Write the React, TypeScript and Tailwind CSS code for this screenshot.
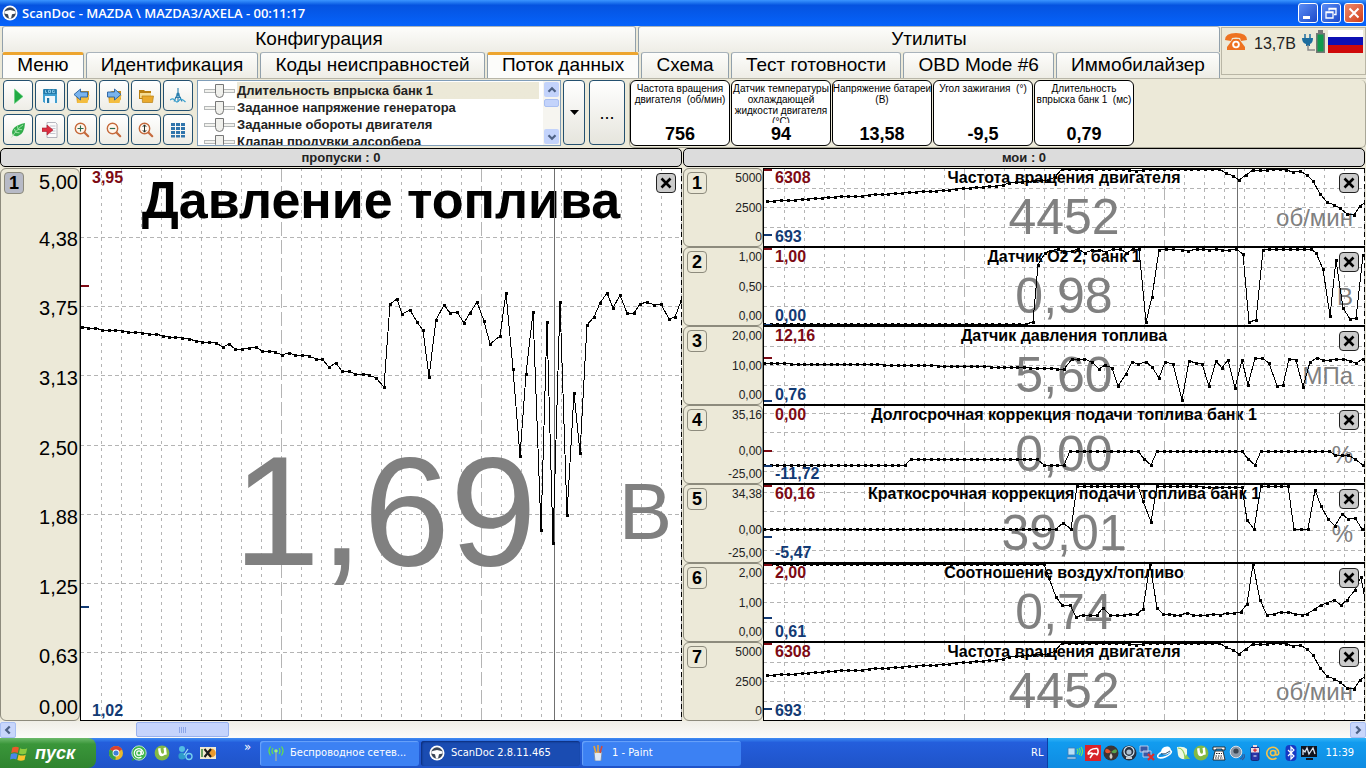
import type { ReactNode } from 'react';

type Point = [number, number];

interface Tick {
  label: string;
  // 0 = top of the chart, 1 = bottom
  at: number;
}

interface ChannelData {
  id: number;
  title: string;
  value: string;
  unit: string;
  max: string;
  min: string;
  maxY: number;
  minY: number;
  ticks: Tick[];
  gridY: number[];
  points: Point[];
}

const W = 602;
const ROW_H = 79;
const MAIN_H = 553;
const STEP = 6.7;

// fills long segments with evenly spaced samples
function resample(keys: Point[]): Point[] {
  const out: Point[] = [keys[0]];
  for (let i = 1; i < keys.length; i++) {
    const [x0, y0] = keys[i - 1];
    const [x1, y1] = keys[i];
    const n = Math.max(1, Math.round((x1 - x0) / STEP));
    for (let k = 1; k <= n; k++) {
      out.push([Math.round(x0 + ((x1 - x0) * k) / n), Math.round(y0 + ((y1 - y0) * k) / n)]);
    }
  }
  return out;
}

const fuelPressure: Point[] = [
  [2, 159], [8, 160], [15, 160], [22, 162], [29, 162], [35, 162], [42, 163], [48, 164], [55, 164], [62, 165],
  [69, 166], [76, 166], [83, 168], [89, 169], [95, 169], [102, 170], [109, 171], [116, 173], [122, 174], [129, 174],
  [136, 175], [143, 179], [149, 176], [155, 181], [162, 181], [169, 180], [176, 179], [182, 183], [189, 183],
  [195, 184], [202, 187], [209, 185], [215, 187], [222, 187], [229, 188], [236, 191], [242, 191], [249, 199],
  [256, 195], [262, 203], [269, 203], [275, 206], [283, 206], [289, 207], [296, 210], [304, 219], [310, 136],
  [317, 131], [322, 146], [330, 142], [337, 154], [343, 162], [349, 209], [356, 152], [364, 137], [370, 145],
  [377, 144], [384, 155], [390, 145], [397, 134], [404, 153], [410, 176], [420, 168], [426, 125], [433, 201],
  [440, 288], [446, 206], [453, 144], [461, 362], [467, 154], [473, 375], [480, 134], [487, 347], [494, 225],
  [500, 285], [507, 157], [514, 149], [520, 135], [527, 125], [533, 140], [540, 127], [547, 145], [554, 145],
  [560, 136], [567, 134], [574, 137], [581, 136], [589, 151], [595, 149], [601, 133],
];

const rpm: Point[] = [
  [4, 33], [25, 32], [52, 30], [78, 28], [99, 28], [112, 26], [125, 26], [160, 23], [186, 22], [200, 20], [233, 18],
  [253, 14], [264, 13], [285, 12], [292, 9], [299, 1], [360, 1], [366, 2], [373, 3], [380, 2], [387, 1], [456, 1],
  [463, 5], [470, 8], [476, 12], [483, 7], [490, 2], [517, 1], [523, 2], [530, 4], [537, 3], [544, 7], [550, 13],
  [557, 26], [564, 34], [571, 37], [577, 40], [584, 46], [591, 47], [597, 38], [603, 34],
];

const oxygen: Point[] = [
  [1, 77], [263, 77], [270, 75], [275, 18], [282, 6], [287, 4], [295, 2], [301, 5], [309, 4], [315, 2], [322, 6],
  [329, 3], [336, 3], [343, 5], [350, 2], [357, 2], [364, 6], [370, 2], [376, 2], [383, 75], [389, 50], [396, 3],
  [403, 2], [410, 2], [419, 3], [425, 4], [434, 2], [440, 2], [446, 3], [453, 2], [459, 3], [466, 3], [473, 2],
  [480, 7], [486, 75], [493, 73], [500, 3], [506, 2], [548, 2], [553, 6], [560, 22], [567, 69], [573, 13],
  [580, 61], [587, 72], [593, 71], [600, 8],
];

const pressure: Point[] = [
  [1, 37], [21, 37], [28, 38], [94, 38], [148, 39], [201, 40], [248, 41], [254, 41], [301, 43], [309, 33],
  [321, 33], [329, 36], [336, 43], [342, 39], [349, 42], [355, 60], [363, 48], [369, 36], [375, 38], [383, 36],
  [389, 41], [396, 52], [402, 36], [410, 38], [419, 74], [426, 35], [433, 37], [439, 38], [446, 60], [453, 35],
  [459, 42], [465, 34], [472, 62], [479, 34], [485, 59], [492, 32], [499, 32], [506, 37], [514, 60], [520, 59],
  [526, 33], [533, 34], [540, 61], [547, 36], [554, 32], [560, 34], [580, 33], [593, 37], [600, 33],
];

const longTrim: Point[] = [
  [1, 60], [142, 60], [148, 54], [274, 54], [281, 60], [301, 60], [307, 46], [375, 46], [381, 54], [388, 60],
  [394, 46], [479, 46], [485, 54], [492, 60], [498, 46], [566, 46], [572, 50], [585, 50], [592, 54], [600, 60],
];

const shortTrim: Point[] = [
  [1, 45], [293, 45], [300, 39], [308, 45], [314, 2], [375, 2], [380, 17], [388, 38], [394, 2], [479, 3], [484, 36],
  [491, 45], [498, 2], [525, 2], [531, 45], [545, 45], [552, 6], [558, 22], [565, 35], [572, 42], [579, 30],
  [585, 35], [592, 34], [599, 45], [602, 45],
];

const airFuel: Point[] = [
  [1, 1], [281, 1], [286, 15], [293, 34], [299, 42], [307, 42], [313, 54], [320, 52], [334, 52], [340, 45],
  [347, 52], [374, 51], [380, 46], [387, 1], [394, 45], [400, 51], [417, 52], [424, 50], [430, 52], [444, 52],
  [450, 51], [457, 52], [464, 50], [478, 49], [484, 41], [490, 1], [497, 37], [504, 52], [518, 49], [525, 49],
  [539, 52], [544, 51], [552, 46], [558, 42], [564, 40], [571, 37], [578, 42], [584, 37], [592, 27], [598, 14],
  [602, 36],
];

const evenGrid = [20, 39, 59];
const trimGrid = [8, 27, 46, 66];

const ticks3 = (a: string, b: string, c: string, mid = 0.5): Tick[] => [
  { label: a, at: 0 },
  { label: b, at: mid },
  { label: c, at: 1 },
];

const channels: ChannelData[] = [
  { id: 1, title: 'Частота вращения двигателя', value: '4452', unit: 'об/мин', max: '6308', min: '693', maxY: 1, minY: 66, ticks: ticks3('5000', '2500', '0'), gridY: evenGrid, points: rpm },
  { id: 2, title: 'Датчик О2 2, банк 1', value: '0,98', unit: 'В', max: '1,00', min: '0,00', maxY: 1, minY: 77, ticks: ticks3('1,00', '0,50', '0,00'), gridY: evenGrid, points: oxygen },
  { id: 3, title: 'Датчик давления топлива', value: '5,60', unit: 'МПа', max: '12,16', min: '0,76', maxY: 31, minY: 74, ticks: ticks3('20,00', '10,00', '0,00'), gridY: evenGrid, points: pressure },
  { id: 4, title: 'Долгосрочная коррекция подачи топлива банк 1', value: '0,00', unit: '%', max: '0,00', min: '-11,72', maxY: 45, minY: 60, ticks: ticks3('35,16', '0,00', '-25,00', 0.58), gridY: trimGrid, points: longTrim },
  { id: 5, title: 'Краткосрочная коррекция подачи топлива банк 1', value: '39,01', unit: '%', max: '60,16', min: '-5,47', maxY: 1, minY: 52, ticks: ticks3('34,38', '0,00', '-25,00', 0.58), gridY: trimGrid, points: shortTrim },
  { id: 6, title: 'Соотношение воздух/топливо', value: '0,74', unit: '', max: '2,00', min: '0,61', maxY: 1, minY: 54, ticks: ticks3('2,00', '1,00', '0,00'), gridY: evenGrid, points: airFuel },
  { id: 7, title: 'Частота вращения двигателя', value: '4452', unit: 'об/мин', max: '6308', min: '693', maxY: 1, minY: 66, ticks: ticks3('5000', '2500', '0'), gridY: evenGrid, points: rpm },
];

const mainTicks = ['5,00', '4,38', '3,75', '3,13', '2,50', '1,88', '1,25', '0,63', '0,00'];

const gauges = [
  { title: 'Частота вращения двигателя  (об/мин)', value: '756' },
  { title: 'Датчик температуры охлаждающей жидкости двигателя (°C)', value: '94' },
  { title: 'Напряжение батареи (В)', value: '13,58' },
  { title: 'Угол зажигания  (°)', value: '-9,5' },
  { title: 'Длительность впрыска банк 1  (мс)', value: '0,79' },
];

const params = [
  'Длительность впрыска банк 1',
  'Заданное напряжение генератора',
  'Заданные обороты двигателя',
  'Клапан продувки адсорбера',
];

const tabs = ['Меню', 'Идентификация', 'Коды неисправностей', 'Поток данных', 'Схема', 'Тест готовности', 'OBD Mode #6', 'Иммобилайзер'];

/* ---------- icons ---------- */

function Svg({ size = 16, children }: { size?: number; children: ReactNode }) {
  return (
    <svg width={size} height={size} viewBox="0 0 16 16" fill="none" aria-hidden="true" className="shrink-0">
      {children}
    </svg>
  );
}

function WheelIcon({ size }: { size?: number }) {
  return (
    <Svg size={size}>
      <circle cx="8" cy="8" r="7.5" fill="#fff" />
      <circle cx="8" cy="8" r="5.8" fill="#3b4656" />
      <path d="M2.5 6.5Q8 3.5 13.5 6.5L13.6 8.5 10 9.2 9 13.4H7L6 9.2 2.4 8.5z" fill="#fff" />
      <path d="M4.2 5.2Q8 3 11.8 5.2 8 4.8 4.2 5.2z" fill="#3b4656" />
    </Svg>
  );
}

const magnifier = (inner: ReactNode) => (
  <>
    <path d="M10.2 10.2l4 4" stroke="#c56a3c" strokeWidth="2.2" strokeLinecap="round" />
    <circle cx="6.5" cy="6.5" r="5.2" fill="#fff7ee" stroke="#c56a3c" strokeWidth="1.4" />
    {inner}
  </>
);

const folder = (
  <>
    <path d="M2 5l4-2h9v8l-3 4H3z" fill="#c98f1e" />
    <path d="M4 7h11.500l-2 8H3z" fill="#f3bd3f" />
  </>
);

const tools: { name: string; icon: ReactNode }[] = [
  { name: 'Старт', icon: <path d="M4.500 1L13 8.500 4.500 15.500z" fill="#22ab44" stroke="#5fd07b" strokeWidth=".6" /> },
  {
    name: 'Сохранить',
    icon: (
      <>
        <path d="M1 1.500h14V15H2.500L1 13.500z" fill="#3f9fd0" />
        <path d="M1.500 1h13v5h-13z" fill="#2278a8" />
        <path d="M3.500 2.200v2.400h1.500M6.500 2.200h2v2.400h-2zM12.500 2.200h-2v2.400h2V3.500" stroke="#9fdcf7" strokeWidth=".8" />
        <path d="M3 8h10v7H3z" fill="#eef7fc" />
        <path d="M5 10h2.200v5H5z" fill="#2278a8" />
      </>
    ),
  },
  {
    name: 'Назад',
    icon: (
      <>
        {folder}
        <path d="M0 6.500l6.500-5.500v3h7v5h-7v3z" fill="#79b4ee" stroke="#28609f" strokeWidth=".9" />
      </>
    ),
  },
  {
    name: 'Вперёд',
    icon: (
      <>
        {folder}
        <path d="M15 6.500L8.500 1v3h-7v5h7v3z" fill="#79b4ee" stroke="#28609f" strokeWidth=".9" />
      </>
    ),
  },
  {
    name: 'Открыть',
    icon: (
      <>
        <path d="M1 2h5l1 1h6v8H1z" fill="#b97f12" />
        <path d="M2 5h11v5H2z" fill="#f6dc93" />
        <path d="M4 8h11.500l-1 6.500H4.500z" fill="#e9a92c" stroke="#b97f12" strokeWidth=".7" />
      </>
    ),
  },
  {
    name: 'Измерение',
    icon: (
      <>
        <path d="M8 0v6M8 5L4 13.500M8 5l4 8.500M8 5v9M5 9.500h6" stroke="#2b7fae" strokeWidth="1.100" />
        <path d="M0 12q3-2.500 5 .5t4 0 6.500 1.500" stroke="#3ba2cf" strokeWidth="1.300" />
        <circle cx="8" cy="6" r="1.600" fill="#2b7fae" />
      </>
    ),
  },
  {
    name: 'Эко',
    icon: (
      <>
        <path d="M15 1Q14.500 12 8 14 4.500 15 2.500 12.500 1 9 4.500 5.500 8 2.500 15 1z" fill="#33ad4c" />
        <path d="M13 3Q8 6 1.500 15.500M8 7.200l-.5-3M5.500 10l-1-3M8 7.500l4 .2M5.500 10.500l4 .3" stroke="#a9e9b0" strokeWidth=".9" />
      </>
    ),
  },
  {
    name: 'Отчёт',
    icon: (
      <>
        <path d="M5 .5h8.500l1.500 1.500v13.500H5z" fill="#fbfbfb" stroke="#9a9aa5" strokeWidth=".7" />
        <path d="M8 4h5.500M9 6.500h4.500M10 9h3.500M8 11.500h5.500" stroke="#b9b9c4" strokeWidth=".8" />
        <path d="M0 6h5V3l6 5-6 5v-3.500H0z" fill="#dc2f40" stroke="#a81c2b" strokeWidth=".6" />
      </>
    ),
  },
  { name: 'Увеличить', icon: magnifier(<path d="M3.500 6.500h6M6.500 3.500v6" stroke="#2e6b4f" strokeWidth="1.100" />) },
  { name: 'Уменьшить', icon: magnifier(<path d="M3.800 6.500h5.400" stroke="#2e6b4f" strokeWidth="1.200" />) },
  { name: 'По высоте', icon: magnifier(<path d="M6.500 3v7M4.800 4.800l1.700-2 1.700 2M4.800 8.200l1.700 2 1.700-2" stroke="#26322c" strokeWidth="1" />) },
  {
    name: 'Таблица',
    icon: (
      <path
        d="M1 1h4v3H1zM6 1h4v3H6zM11 1h4v3h-4zM1 5h4v3H1zM6 5h4v3H6zM11 5h4v3h-4zM1 9h4v3H1zM6 9h4v3H6zM11 9h4v3h-4zM1 13h4v2.500H1zM6 13h4v2.500H6zM11 13h4v2.500h-4z"
        fill="#2f74ab"
      />
    ),
  },
];

const quickLaunch: ReactNode[] = [
  <>
    <circle cx="8" cy="8" r="7" fill="#e8b92c" />
    <path d="M8 8L1.900 4.500A7 7 0 0 1 14.100 4.500z" fill="#da4031" />
    <path d="M8 8L1.900 4.500A7 7 0 0 0 7.500 15z" fill="#37a04a" />
    <circle cx="8" cy="8" r="3.400" fill="#fff" />
    <circle cx="8" cy="8" r="2.600" fill="#3f7fd8" />
  </>,
  <>
    <path d="M2 12l-1 4 4-2z" fill="#2e9e3d" />
    <circle cx="8" cy="8" r="7.200" fill="#3eb64c" stroke="#d7f4da" strokeWidth=".8" />
    <circle cx="8" cy="8" r="2.200" stroke="#fff" strokeWidth="1.300" />
    <path d="M10.200 5.500v3.300q1.800 1.500 2.200-1A4.600 4.600 0 1 0 10.500 12" stroke="#fff" strokeWidth="1.200" />
  </>,
  <>
    <circle cx="8" cy="8" r="7.400" fill="#84b943" />
    <path d="M4 3.500l2.500-.4q.2 5.500 2 5.700T10 6.500L9.500 3l2.500-.4.800 6.900-2.300.6q-4 2.800-5.700-1z" fill="#fff" />
  </>,
  <>
    <circle cx="5" cy="4" r="3" fill="#53bde4" />
    <circle cx="5" cy="11" r="3.600" fill="#2f9ccb" />
    <circle cx="12" cy="11.500" r="3" stroke="#74d0ef" strokeWidth="1.400" />
    <path d="M7 10l4-6" stroke="#a3e2f6" strokeWidth="1.200" />
  </>,
  <>
    <path d="M0 2h16v12H0z" fill="#f2ead0" />
    <circle cx="11.500" cy="8" r="4.300" fill="#eb9a2e" />
    <path d="M2 4v8" stroke="#3c8a3a" strokeWidth="1.500" />
    <path d="M4.500 4l6.500 8M11 4l-6.500 8" stroke="#1b1b1b" strokeWidth="2" />
  </>,
];

const tray: ReactNode[] = [
  <>
    <path d="M1 3h7v7H1zM0 12h9v2H0z" fill="#b9e0f7" stroke="#3c78b4" strokeWidth=".8" />
    <path d="M10 4q2 2 0 5M12 3q2.500 3 0 7M14 2q3 4 0 9" stroke="#6bea5a" strokeWidth="1.100" />
  </>,
  <>
    <path d="M0 0h16v16H0z" fill="#d8232a" />
    <path d="M3 9.500Q4 3 12.500 3.500M12.500 3.500Q14 7 12 10M3 9.500Q6 7 8 9 10 7.500 12 10M8 8.500L5 13" stroke="#fff" strokeWidth="1.500" />
  </>,
  <>
    <circle cx="8" cy="8" r="7.500" fill="#3c3535" />
    <path d="M8 7Q3 1 2 6q1 4 6 1z" fill="#e0532e" />
    <path d="M8 7q5-5 6-1-1 4-6 1z" fill="#58a24c" />
    <path d="M8 8q-3 4 0 6 3-2 0-6z" fill="#d7cfc4" />
  </>,
  <>
    <circle cx="8" cy="8" r="7.500" fill="#27303f" />
    <circle cx="8" cy="6.500" r="5" stroke="#cfe3f2" strokeWidth="1.200" />
    <circle cx="8" cy="7" r="2.600" fill="#aebfd0" />
    <path d="M5 13h6" stroke="#fff" strokeWidth="1.500" />
  </>,
  <>
    <path d="M1 1h8v6H1zM4 6h8v6H4z" fill="#3758a5" stroke="#c7d5ef" strokeWidth=".9" />
    <path d="M9 9l6 6M15 9l-6 6" stroke="#e02c2c" strokeWidth="2.200" />
  </>,
  <>
    <ellipse cx="9" cy="5.500" rx="5" ry="3.800" fill="#fff" transform="rotate(-25 9 5.500)" />
    <ellipse cx="7.500" cy="9" rx="7.300" ry="3" stroke="#fff" strokeWidth="1.600" transform="rotate(-22 7.500 9)" />
    <path d="M4 9q4 1 9-3" stroke="#31506f" strokeWidth="1" />
  </>,
  <>
    <path d="M2 2Q9 1 12 4v10q-8 1-9-4z" fill="#eef9e2" />
    <path d="M3 3q6 0 7 10" stroke="#8bcb55" strokeWidth="1.200" />
    <path d="M11 9l4 5H9z" fill="#8bcb55" />
  </>,
  <>
    <circle cx="8" cy="8" r="7.400" fill="#84b943" />
    <path d="M4 3.500l2.500-.4q.2 5.500 2 5.700T10 6.500L9.500 3l2.500-.4.800 6.900-2.300.6q-4 2.800-5.700-1z" fill="#fff" />
  </>,
  <>
    <path d="M2 5V2h12v3h-3V4H5v1zM4 6h8l2 9H2z" fill="#fff" stroke="#222" strokeWidth=".9" />
    <path d="M5 8.500h6M4.500 11h7M4 13h8" stroke="#222" strokeWidth="1" strokeDasharray="1.500 1" />
  </>,
  <>
    <circle cx="7" cy="7" r="5.800" fill="#8d99a8" stroke="#d9e0e8" strokeWidth="1" />
    <circle cx="7" cy="6" r="2.600" fill="#3b4654" />
    <path d="M11 14q3-1 3-5M13 15q3-2 3-6" stroke="#2f5c9c" strokeWidth="1.100" />
  </>,
  <>
    <rect x="4" y="2" width="8" height="13.500" rx="1.500" fill="#2a35a8" stroke="#151c66" strokeWidth=".8" />
    <path d="M6 0h4v2H6zM4 3h8v4.500H4z" fill="#f0d9dc" />
    <path d="M8 3.500v3.500M6.200 5.200h3.600" stroke="#d4202b" strokeWidth="1.200" />
    <path d="M6.500 11h3" stroke="#fff" strokeWidth="1" />
  </>,
  <>
    <circle cx="8" cy="8" r="2.600" stroke="#f5c24a" strokeWidth="1.500" />
    <path d="M10.600 5.500v4q2.500 1.500 3.200-1.500A6 6 0 1 0 11.500 13" stroke="#f5c24a" strokeWidth="1.600" />
  </>,
  <>
    <rect x="2.500" y="0" width="11" height="16" rx="4" fill="#1539c4" />
    <path d="M5 5l6 6-3 3V2l3 3-6 6" stroke="#fff" strokeWidth="1.200" />
  </>,
  <>
    <path d="M0 1h16v11H0zM5 13h7v2H5z" fill="#11151f" />
    <path d="M2 10V5l2 2 2-4 2 6 2-3 2-3 2 6" stroke="#d8e2ee" strokeWidth="1.300" />
  </>,
];

function Chevron({ dir }: { dir: 'up' | 'down' | 'left' | 'right' }) {
  const d = { up: 'M4 10l4-4 4 4', down: 'M4 6l4 4 4-4', left: 'M10 4L6 8l4 4', right: 'M6 4l4 4-4 4' }[dir];
  return (
    <Svg size={14}>
      <path d={d} stroke="#4d6185" strokeWidth="2.600" />
    </Svg>
  );
}

/* ---------- charts ---------- */

function Plot({ height, gridY, points, maxY, minY }: {
  height: number; gridY: number[]; points: Point[]; maxY: number; minY: number;
}) {
  const cols = Array.from({ length: 30 }, (_, i) => 21 + i * 20).filter(x => x < W);
  return (
    <>
      <svg viewBox={`0 0 ${W} ${height}`} preserveAspectRatio="none" className="absolute inset-0 h-full w-full" shapeRendering="crispEdges">
        {cols.map(x => (
          <line
            key={x}
            x1={x + 0.5}
            x2={x + 0.5}
            y1={0}
            y2={height}
            stroke="#b4b4b4"
            strokeDasharray={(x - 1) % 200 === 0 ? '14 4' : '3 4'}
          />
        ))}
        {gridY.map(y => (
          <line key={y} x1={0} x2={W} y1={y + 0.5} y2={y + 0.5} stroke="#b4b4b4" strokeDasharray="4 3" />
        ))}
      </svg>
      {/* trace layer stays above the value text */}
      <svg viewBox={`0 0 ${W} ${height}`} preserveAspectRatio="none" className="absolute inset-0 z-10 h-full w-full" shapeRendering="crispEdges">
        <line x1={474.5} x2={474.5} y1={0} y2={height} stroke="#707070" />
        <polyline points={points.map(p => p.join(',')).join(' ')} fill="none" stroke="#000" />
        {points.map(([x, y], i) => (
          <rect key={i} x={x - 1} y={y - 1} width={3} height={3} />
        ))}
        <rect x={1} y={maxY} width={8} height={2} fill="#7d0a14" />
        <rect x={1} y={minY} width={8} height={2} fill="#123a74" />
        <path d={`M${W} .5H.5V${height - 0.5}H${W}`} fill="none" stroke="#000" />
        <line x1={W - 0.5} x2={W - 0.5} y1={0} y2={height} stroke="#000" strokeDasharray="5 3" />
      </svg>
    </>
  );
}

function CloseButton() {
  return (
    <button
      aria-label="Закрыть"
      className="absolute right-[6px] top-[5px] z-20 flex h-5 w-5 items-center justify-center rounded border border-[#222] bg-[#cbcbcb]"
    >
      <svg width="12" height="12" viewBox="0 0 12 12" aria-hidden="true">
        <path d="M1.500 1.500l9 9M10.500 1.500l-9 9" stroke="#000" strokeWidth="2.600" />
      </svg>
    </button>
  );
}

function MinMax({ max, min }: { max: string; min: string }) {
  return (
    <>
      <span className="absolute left-3 top-0 text-base leading-5 font-bold text-[#7d0a14]">{max}</span>
      <span className="absolute bottom-0 left-3 text-base leading-5 font-bold text-[#123a74]">{min}</span>
    </>
  );
}

function Channel({ data }: { data: ChannelData }) {
  const mid = data.ticks[1];
  return (
    <div className="flex min-h-[79px] flex-1">
      <div className="flex w-20 shrink-0 justify-between rounded-md border border-[#8d8b7d] bg-[#ece9d8] pl-[3px]">
        <button className="mt-[3px] h-[22px] w-5 rounded border border-[#8d8b7d] text-lg leading-5 font-bold">{data.id}</button>
        <div className="flex flex-col text-right text-xs leading-[18px] text-[#222]">
          <div className="flex min-h-0 basis-0 items-start justify-end" style={{ flexGrow: mid.at }}>{data.ticks[0].label}</div>
          <div className="flex h-0 items-center justify-end">{mid.label}</div>
          <div className="flex min-h-0 basis-0 items-end justify-end" style={{ flexGrow: 1 - mid.at }}>{data.ticks[2].label}</div>
        </div>
      </div>
      <div className="relative flex-1 overflow-hidden bg-white">
        <Plot height={ROW_H} gridY={data.gridY} points={resample(data.points)} maxY={data.maxY} minY={data.minY} />
        <MinMax max={data.max} min={data.min} />
        <h3 className="absolute inset-x-0 top-0 text-center text-base leading-5 font-bold">{data.title}</h3>
        <div className="absolute inset-x-0 top-6 text-center text-[50px] leading-[50px] text-[#808080]">{data.value}</div>
        <div className="absolute right-3 top-9 text-2xl leading-7 text-[#808080]">{data.unit}</div>
        <CloseButton />
      </div>
    </div>
  );
}

function MainChannel() {
  return (
    <div className="flex flex-1">
      <div className="flex w-20 shrink-0 justify-between rounded-md border border-[#8d8b7d] bg-[#ece9d8] px-[3px] pr-px">
        <button className="mt-[3px] h-[22px] w-5 rounded border border-[#8d8b7d] bg-[#b7bac6] text-lg leading-5 font-bold">1</button>
        <div className="flex flex-col text-xl leading-[26px]">
          {mainTicks.map((t, i) => {
            if (i === 0) return <div key={t} className="flex flex-1 basis-0 items-start">{t}</div>;
            if (i === mainTicks.length - 1) return <div key={t} className="flex flex-1 basis-0 items-end">{t}</div>;
            return <div key={t} className="flex flex-2 basis-0 items-center pt-1.5">{t}</div>;
          })}
        </div>
      </div>
      <div className="relative flex-1 overflow-hidden bg-white">
        <Plot height={MAIN_H} gridY={[69, 138, 207, 277, 346, 415, 484]} points={fuelPressure} maxY={117} minY={438} />
        <MinMax max="3,95" min="1,02" />
        <h2 className="absolute inset-x-0 top-1 text-center text-[52px] leading-[56px] font-bold">Давление топлива</h2>
        <div className="absolute inset-x-0 top-[263px] pl-2 text-center text-[156px] leading-[160px] text-[#808080]">1,69</div>
        <div className="absolute right-[10px] top-[304px] text-[80px] leading-[80px] text-[#808080]">В</div>
        <CloseButton />
      </div>
    </div>
  );
}

/* ---------- window chrome ---------- */

function TitleBar() {
  return (
    <header className="flex h-[26px] items-center gap-1 bg-linear-to-b from-[#3b95ff] via-[#0553e0] via-20% to-[#0663fb] px-0.5 text-white">
      <WheelIcon size={16} />
      <h1 className="flex-1 font-['Open_Sans','Noto_Sans',sans-serif] text-[13px] leading-5 font-semibold">
        ScanDoc - MAZDA \ MAZDA3/AXELA - 00:11:17
      </h1>
      <div className="flex gap-[3px]">
        <button aria-label="Свернуть" className="flex h-5 w-5 items-end justify-center rounded-[3px] border border-white bg-linear-to-br from-[#5c8df5] to-[#1c48c9] pb-[3px]">
          <span className="mr-1 h-[3px] w-[7px] bg-white" />
        </button>
        <button aria-label="Восстановить" className="flex h-5 w-5 items-center justify-center rounded-[3px] border border-white bg-linear-to-br from-[#5c8df5] to-[#1c48c9]">
          <svg width="12" height="12" viewBox="0 0 12 12" fill="none" stroke="#fff" strokeWidth="1.300" aria-hidden="true">
            <path d="M4 3.500V1.500h7v6H9M3.500 2h8M1 5h7v6H1zM1 5.500h7" />
          </svg>
        </button>
        <button aria-label="Закрыть окно" className="flex h-5 w-5 items-center justify-center rounded-[3px] border border-white bg-linear-to-br from-[#ee8a6a] to-[#cf3a12]">
          <svg width="12" height="12" viewBox="0 0 12 12" aria-hidden="true">
            <path d="M1.500 1.500l9 9M10.500 1.500l-9 9" stroke="#fff" strokeWidth="2" />
          </svg>
        </button>
      </div>
    </header>
  );
}

function TabBar() {
  const active = 'border-t-[3px] border-t-[#eda52f] bg-[#fcfcfa] leading-[20px]';
  const idle = 'border-t border-t-[#a9b3bb] bg-linear-to-b from-[#fdfdfb] to-[#eeede6] leading-[24px]';
  const base = 'flex h-[26px] flex-auto items-start justify-center rounded-t-[3px] border-x border-[#91a0ab] text-[19px] whitespace-nowrap';
  return (
    <div className="flex">
      <nav role="tablist" className="flex flex-1 flex-col pl-0.5">
        <div className="flex gap-0.5">
          {['Конфигурация', 'Утилиты'].map(t => (
            <button key={t} role="tab" className={`${base} ${idle}`}>{t}</button>
          ))}
        </div>
        <div className="flex gap-0.5">
          {tabs.map(t => (
            <button key={t} role="tab" className={`${base} ${t === 'Меню' || t === 'Поток данных' ? active : idle}`}>{t}</button>
          ))}
        </div>
      </nav>
      <div className="w-[146px] py-px pl-px">
        <div className="flex h-[48px] items-start border border-[#b9b6a5] pt-1 pr-0.5 pl-0.5">
          <svg width="24" height="20" viewBox="0 0 24 20" aria-hidden="true">
            <path d="M1 8q0-7 11-7t11 7l-6 1-1-3q-4-1-8 0L7 9z" fill="#ee7220" />
            <path d="M9 7h6l6 8v3H3v-3z" fill="#ee7220" />
            <circle cx="12" cy="12.500" r="3.800" fill="#fff" />
            <circle cx="12" cy="12.500" r="1.900" fill="#ee7220" />
          </svg>
          <span className="ml-1.5 text-base leading-6 text-[#222]">13,7В</span>
          <svg width="24" height="24" viewBox="0 0 24 24" className="-mt-0.5 ml-1.5" aria-hidden="true">
            <path d="M3 4v4M8 4v4" stroke="#1d6d9e" strokeWidth="1.500" />
            <path d="M0 8h11q0 5-3 6v2H4v-2q-4-1-4-6z" fill="#1d6d9e" />
            <path d="M6 15v5h7" stroke="#8b8b8b" strokeWidth="1.500" fill="none" />
            <path d="M16 0h5v3h2v20h-9V3h2z" fill="#777" />
            <path d="M15.500 4.500h6v17h-6z" fill="#109a4c" />
          </svg>
          <svg viewBox="0 0 36 24" className="-mt-0.5 ml-0.5 h-6 min-w-0 flex-1" preserveAspectRatio="none" role="img" aria-label="Русский">
            <path d="M0 0h36v7H0z" fill="#fff" />
            <path d="M0 7h36v8H0z" fill="#0d10b4" />
            <path d="M0 15h36v8H0z" fill="#cf0a0a" />
          </svg>
        </div>
      </div>
    </div>
  );
}

function ToolBar() {
  const wide = 'flex items-center justify-center rounded border border-[#24506f] bg-linear-to-b from-white to-[#e6e5dd]';
  return (
    <div className="flex h-[70px] border-t border-[#b8b6a8] pt-px">
      <div className="ml-[3px] grid grid-cols-6 gap-x-0.5 gap-y-[3px] self-start">
        {tools.map(t => (
          <button key={t.name} aria-label={t.name} className="flex h-[31px] w-[30px] items-center justify-center rounded border border-[#24506f] bg-linear-to-b from-white to-[#eeede6]">
            <Svg>{t.icon}</Svg>
          </button>
        ))}
      </div>
      <div className="ml-1 flex h-[66px] w-[364px] border border-[#7f9db9] bg-white">
        <ul className="flex-1 overflow-hidden pt-px pl-1.5">
          {params.map((p, i) => (
            <li key={p} className="h-[17px]">
              <label className={`flex h-[17px] items-center gap-0.5 ${i === 0 ? 'bg-linear-to-r from-white from-10% to-[#ece9d8] to-10%' : ''}`}>
                <input
                  type="range"
                  defaultValue={50}
                  className="h-3.5 w-[31px] appearance-none bg-transparent [&::-webkit-slider-runnable-track]:h-1 [&::-webkit-slider-runnable-track]:border [&::-webkit-slider-runnable-track]:border-[#b5b8b8] [&::-webkit-slider-runnable-track]:bg-[#f2f2ee] [&::-webkit-slider-thumb]:-mt-1.5 [&::-webkit-slider-thumb]:h-3.5 [&::-webkit-slider-thumb]:w-[9px] [&::-webkit-slider-thumb]:appearance-none [&::-webkit-slider-thumb]:rounded-b-full [&::-webkit-slider-thumb]:border [&::-webkit-slider-thumb]:border-[#777] [&::-webkit-slider-thumb]:bg-[#f0f0ec]"
                />
                <span className="text-[13px] leading-[17px] font-bold whitespace-nowrap text-[#222]">{p}</span>
              </label>
            </li>
          ))}
        </ul>
        <div className="ml-1 flex w-[17px] flex-col justify-between bg-[#f6f5f0] p-px">
          <div className="flex flex-col gap-0.5">
            <button aria-label="Вверх" className="flex h-[15px] items-center justify-center rounded-[2px] bg-[#c3d3fb]"><Chevron dir="up" /></button>
            <span className="h-2 rounded-[2px] border border-[#a9bff2] bg-[#c3d3fb]" />
          </div>
          <button aria-label="Вниз" className="flex h-[15px] items-center justify-center rounded-[2px] bg-[#c3d3fb]"><Chevron dir="down" /></button>
        </div>
      </div>
      <button aria-label="Список" className={`${wide} ml-0.5 h-[65px] w-[22px]`}>
        <svg width="9" height="5" viewBox="0 0 9 5" aria-hidden="true"><path d="M0 0h9L4.500 5z" /></svg>
      </button>
      <button className={`${wide} ml-1 h-[65px] w-9 text-lg`}>...</button>
      <div className="ml-1 flex flex-1 gap-px rounded-[5px] border border-t-0 border-[#a9a797] pb-px">
        {gauges.map(g => (
          <div key={g.title} className="flex h-[66px] w-[100px] flex-col items-center justify-between rounded-md border border-black bg-white pt-0.5">
            <div className="-mx-px h-10 w-[100px] overflow-hidden text-center text-[10px] leading-[11px] whitespace-pre-wrap">{g.title}</div>
            <div className="text-lg leading-[22px] font-bold">{g.value}</div>
          </div>
        ))}
      </div>
    </div>
  );
}

function GroupHeader({ text }: { text: string }) {
  return (
    <div className="mb-px flex h-[19px] items-center justify-center rounded-[5px] border border-black bg-[#dcdcdc] text-[13px] leading-4 font-bold text-[#222]">
      {text}
    </div>
  );
}

function ScrollBar() {
  const btn = 'flex h-4 w-4 items-center justify-center rounded-[2px] border border-[#a9bff2] bg-[#c8d6fb]';
  return (
    <div className="flex h-[17px] items-center bg-linear-to-b from-[#efeee7] to-[#fcfcfa]">
      <button aria-label="Влево" className={btn}><Chevron dir="left" /></button>
      <div className="flex-1">
        <div className="ml-[9%] flex h-[15px] w-[7%] items-center justify-center gap-px rounded-[2px] border border-[#98b1ee] bg-[#c5d4fc]">
          {[0, 1, 2, 3].map(i => <span key={i} className="h-1.5 w-px bg-[#8ca6e8]" />)}
        </div>
      </div>
      <button aria-label="Вправо" className={btn}><Chevron dir="right" /></button>
    </div>
  );
}

function TaskButton({ icon, text, active }: { icon: ReactNode; text: string; active?: boolean }) {
  return (
    <button
      className={`flex h-[25px] w-[159px] items-center gap-1.5 rounded-[3px] pl-2 text-left ${active ? 'bg-[#1a4cb2] shadow-[inset_1px_1px_2px_#0b2c78]' : 'bg-[#3c81f3] shadow-[inset_1px_1px_1px_#6ba4fa]'}`}
    >
      {icon}
      <span className="whitespace-nowrap">{text}</span>
    </button>
  );
}

function TaskBar() {
  return (
    <footer className="flex h-[30px] items-center bg-linear-to-b from-[#3f8cf3] via-[#245edc] via-15% to-[#1f53c8] font-['DejaVu_Sans_Condensed','DejaVu_Sans',sans-serif] text-[11px] text-white">
      <button className="flex h-full w-24 items-center gap-1.5 rounded-r-lg bg-linear-to-b from-[#6cba6c] via-[#3a963a] via-20% to-[#2f842f] pl-2.5">
        <Svg size={19}>
          <path d="M2 3q3-1.500 5.500 0L6.500 7.500Q4 6.200 1 7.500z" fill="#ea5a2c" />
          <path d="M8.500 3.500q3 1.500 6 0L13.500 8q-3 1.200-6 0z" fill="#8ccb3f" />
          <path d="M.8 8.500q3-1.300 5.500 0L5.300 13Q3 11.700 0 13z" fill="#4a86ea" />
          <path d="M7.200 9q3 1.500 6 0L12.200 13.500q-3 1.200-6 0z" fill="#fbc42c" />
        </Svg>
        <span className="font-['Liberation_Sans',Arial,sans-serif] text-lg font-bold italic">пуск</span>
      </button>
      <div className="ml-3 flex gap-[7px]">
        {quickLaunch.map((icon, i) => <Svg key={i}>{icon}</Svg>)}
      </div>
      <span className="mb-3 ml-7 w-4 text-[13px]">»</span>
      <div className="flex gap-0.5">
        <TaskButton
          text="Беспроводное сетев..."
          icon={
            <Svg>
              <path d="M8 8v8" stroke="#9aa" strokeWidth="1.500" />
              <circle cx="8" cy="6" r="1.800" fill="#9ff07a" />
              <path d="M5 3q-2 3 0 6M2.500 1.500q-3 4.500 0 9M11 3q2 3 0 6M13.500 1.500q3 4.500 0 9" stroke="#63dd4f" strokeWidth="1.300" />
            </Svg>
          }
        />
        <TaskButton active text="ScanDoc 2.8.11.465" icon={<WheelIcon />} />
        <TaskButton
          text="1 - Paint"
          icon={
            <Svg>
              <path d="M4 7h8l-1 9H5z" fill="#dfe9f5" stroke="#6d86a8" strokeWidth=".8" />
              <path d="M6 8L4 1M8 8V0" stroke="#e5a33b" strokeWidth="1.600" />
              <path d="M10 8l2-7" stroke="#d34a3a" strokeWidth="1.600" />
            </Svg>
          }
        />
      </div>
      <span className="ml-auto px-px">RL</span>
      <div className="ml-[3px] flex h-full items-center gap-0.5 border-l border-[#0b3fa5] bg-linear-to-b from-[#2fb4f6] via-[#129cef] via-15% to-[#0f8be2] pr-3 pl-[19px]">
        {tray.map((icon, i) => <Svg key={i}>{icon}</Svg>)}
        <time className="ml-1.5">11:39</time>
      </div>
    </footer>
  );
}

export default function App() {
  return (
    <div className="flex min-h-screen flex-col bg-[#ece9d8] font-['Liberation_Sans',Arial,sans-serif] text-black">
      <TitleBar />
      <TabBar />
      <ToolBar />
      <main className="grid flex-1 grid-cols-2">
        <section className="flex flex-col pr-px">
          <GroupHeader text="пропуски : 0" />
          <MainChannel />
        </section>
        <section className="flex flex-col pr-px">
          <GroupHeader text="мои : 0" />
          {channels.map(c => <Channel key={c.id} data={c} />)}
        </section>
      </main>
      <ScrollBar />
      <TaskBar />
    </div>
  );
}
